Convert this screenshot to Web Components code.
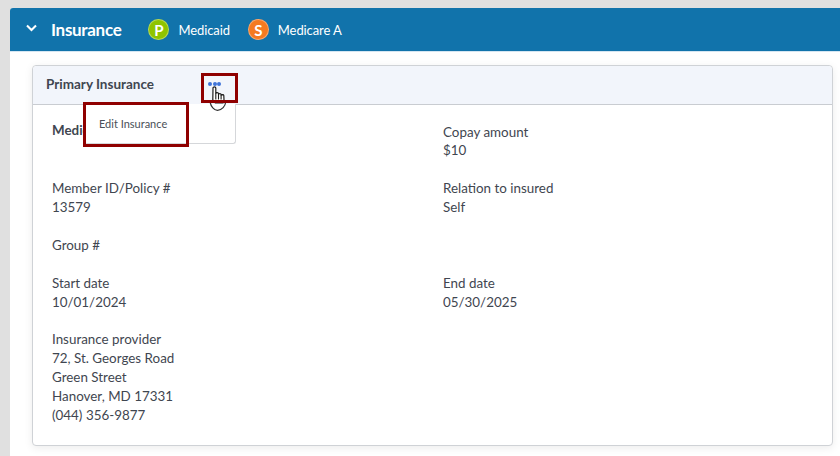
<!DOCTYPE html>
<html><head><meta charset="utf-8">
<style>
html,body{margin:0;height:456px;overflow:hidden;background:#e0e0e0;font-family:Lato,"Liberation Sans",sans-serif}
body{padding:8px 0 0 10px;box-sizing:border-box}
</style></head><body>
<template id="t-panel"><style>
:host{display:block;background:#fff;height:448px;border-radius:3px 0 0 0;overflow:hidden}
header{height:43px;background:#1173ab;display:flex;align-items:center;color:#fff;border-bottom:1px solid #d5e6f2;box-sizing:content-box}
svg{margin-left:16px;margin-right:14px;margin-bottom:3px;flex:none}
h2{margin:0 27px 0 0;font-size:17px;font-weight:700;line-height:43px;letter-spacing:-.3px}
.tags{display:flex;gap:18px}
main{display:block;padding:13px 7px 0 22px}
</style><header><svg width="11" height="8" viewBox="0 0 11 8"><path d="M1 1.500 5.500 6 10 1.500" fill="none" stroke="#fff" stroke-width="2.100"/></svg><h2><slot name="title"></slot></h2><div class="tags"><slot name="tags"></slot></div></header><main><slot></slot></main></template>

<template id="t-tag"><style>
:host{display:inline-flex;align-items:center;gap:9px;font-size:13px;color:#fff;letter-spacing:-.1px}
b{width:21px;height:21px;border-radius:50%;background:var(--c);display:flex;align-items:center;justify-content:center;font-size:15px;font-weight:700;color:#fff;box-shadow:inset 0 0 0 1px rgba(255,255,255,.35)}
</style><b><slot name="l"></slot></b><span><slot></slot></span></template>

<template id="t-card"><style>
:host{display:block;position:relative;background:#fff;border:1px solid #cfd2d6;border-radius:4px;box-shadow:0 2px 8px rgba(0,0,0,.08);height:381px;box-sizing:border-box}
header{background:#f2f5fb;border-bottom:1px solid #c9ccd1;display:flex;align-items:center;padding:0 0 3px 13px;box-sizing:content-box;height:35px;font-size:13.5px;font-weight:700;color:#3f4650;border-radius:4px 4px 0 0}
.dots{display:flex;gap:.6px;margin-left:54px;margin-top:1px;position:relative;z-index:2}
.dots i{width:4px;height:4px;border-radius:50%;background:#3f73d8}
.body{display:grid;grid-template-columns:391px 1fr;row-gap:18.7px;padding:18px 0 0 19px;font-size:13.4px;line-height:18.9px;color:#3f4650}
</style><header><slot name="title"></slot><span class="dots"><i></i><i></i><i></i></span></header><div class="body"><slot></slot></div><slot name="over"></slot></template>

<template id="t-field"><style>
:host{display:block;white-space:pre-line;min-height:19px}
</style><slot></slot></template>

<template id="t-menu"><style>
:host{display:block;position:absolute;left:51px;top:38px;width:152px;height:40px;background:#fff;border:1px solid #d5d7da;border-top:0;border-radius:0 0 3px 3px;box-sizing:border-box;font-size:11px;color:#4a5058;padding:12px 0 0 14px;line-height:15px}
</style><slot></slot></template>

<template id="t-mark"><style>
:host{display:block;position:absolute;box-sizing:border-box;border:3px solid #8f0000;pointer-events:none}
</style></template>

<template id="t-cursor"><style>
:host{display:block;position:absolute;width:18px;height:26px;left:176px;top:20px}
svg{display:block;overflow:visible}
</style><svg width="18" height="26" viewBox="0 0 18 26"><path d="M4 2c0-1.500 2.800-1.500 2.800 0V7.500c0-1.200 2.700-1.200 2.700 0v1c0-1.200 2.600-1.200 2.600 0v1c0-1.100 2.700-1.100 2.700 0l.2 4c0 1.500-.4 2.300-1 3.500H6.500L3.800 14z" fill="#fff" stroke="#1c1c1c" stroke-width="1.200" stroke-linejoin="round"/><path d="M6.800 7.500v6M9.500 8.500v5M12.100 9.500v4" stroke="#1c1c1c" stroke-width="1.100" fill="none"/><path d="M1 16c1 4.500 4 8.300 7.500 8.300 4.500 0 7.800-4 8.300-8.800" fill="none" stroke="#333" stroke-width="1.200"/></svg></template>

<ins-panel>
  <span slot="title">Insurance</span>
  <ins-tag slot="tags" style="--c:#8fc400"><span slot="l">P</span>Medicaid</ins-tag>
  <ins-tag slot="tags" style="--c:#f47a20"><span slot="l">S</span>Medicare A</ins-tag>
  <ins-card>
    <span slot="title">Primary Insurance</span>
    <ins-field style="font-weight:700;margin-top:-2px">Medicaid</ins-field>
    <ins-field style="line-height:18.200px;margin-bottom:1.400px">Copay amount
$10</ins-field>
    <ins-field>Member ID/Policy #
13579</ins-field>
    <ins-field>Relation to insured
Self</ins-field>
    <ins-field style="grid-column:1/3">Group #</ins-field>
    <ins-field>Start date
10/01/2024</ins-field>
    <ins-field>End date
05/30/2025</ins-field>
    <ins-field style="grid-column:1/3">Insurance provider
72, St. Georges Road
Green Street
Hanover, MD 17331
(044) 356-9877</ins-field>
    <ins-menu slot="over">Edit Insurance</ins-menu>
    <ins-cursor slot="over"></ins-cursor>
    <ins-mark slot="over" style="left:168px;top:7px;width:37px;height:30px"></ins-mark>
    <ins-mark slot="over" style="left:50px;top:36px;width:106px;height:45px"></ins-mark>
  </ins-card>
</ins-panel>
<script>
for (const [n,t] of [['ins-panel','t-panel'],['ins-tag','t-tag'],['ins-card','t-card'],['ins-field','t-field'],['ins-menu','t-menu'],['ins-mark','t-mark'],['ins-cursor','t-cursor']]) {
  customElements.define(n, class extends HTMLElement {
    constructor(){super();this.attachShadow({mode:'open'}).appendChild(document.getElementById(t).content.cloneNode(true));}
  });
}
</script>
</body></html>
